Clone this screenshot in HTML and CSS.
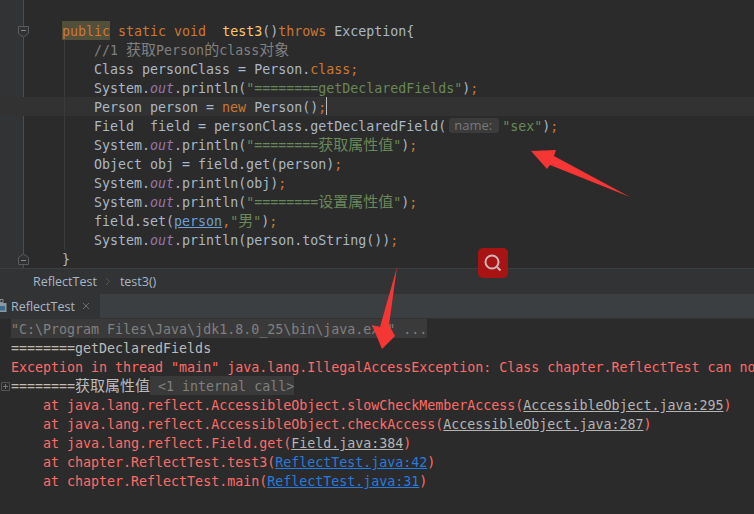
FILE: index.html
```html
<!DOCTYPE html>
<html lang="en">
<head>
<meta charset="utf-8">
<title>ReflectTest</title>
<link rel="stylesheet" href="styles.css">
</head>
<body>
<div class="app">
  <section class="editor">
    <div class="gutter"></div>
    <svg class="fold fold-top" width="13" height="13" viewBox="0 0 13 13"><path d="M1.500 1.500h10v7l-5 3.500-5-3.500z" class="fold-shape"/><path d="M4 5.500h5" class="fold-mark"/></svg>
    <svg class="fold fold-bottom" width="13" height="13" viewBox="0 0 13 13"><path d="M1.500 11.500h10v-7l-5-3.500-5 3.500z" class="fold-shape"/><path d="M4 7.500h5" class="fold-mark"/></svg>
    <div class="code">
      <div class="line">}</div>
      <div class="line"></div>
      <div class="line"><span class="kw hl">public</span> <span class="kw">static void</span>  <span class="fn">test3</span>()<span class="kw">throws</span> Exception{</div>
      <div class="line">    <span class="cm">//1 <span class="cjk">获取</span>Person<span class="cjk">的</span>class<span class="cjk">对象</span></span></div>
      <div class="line">    Class personClass = Person.<span class="kw">class;</span></div>
      <div class="line">    System.<span class="st-f">out</span>.println(<span class="str">"========getDeclaredFields"</span>)<span class="kw">;</span></div>
      <div class="line current">    Person person = <span class="kw">new</span> Person()<span class="kw">;</span><span class="caret"></span></div>
      <div class="line">    Field  field = personClass.getDeclaredField(<span class="hint">name:</span><span class="str">"sex"</span>)<span class="kw">;</span></div>
      <div class="line">    System.<span class="st-f">out</span>.println(<span class="str">"========<span class="cjk">获取属性值</span>"</span>)<span class="kw">;</span></div>
      <div class="line">    Object obj = field.get(person)<span class="kw">;</span></div>
      <div class="line">    System.<span class="st-f">out</span>.println(obj)<span class="kw">;</span></div>
      <div class="line">    System.<span class="st-f">out</span>.println(<span class="str">"========<span class="cjk">设置属性值</span>"</span>)<span class="kw">;</span></div>
      <div class="line">    field.set(<span class="ul">person</span><span class="kw">,</span><span class="str">"<span class="cjk">男</span>"</span>)<span class="kw">;</span></div>
      <div class="line">    System.<span class="st-f">out</span>.println(person.toString())<span class="kw">;</span></div>
      <div class="line">}</div>
    </div>
    <div class="indent-guide"></div>
  </section>
  <nav class="crumbs">
    <span>ReflectTest</span>
    <svg class="crumb-sep" width="6" height="9" viewBox="0 0 6 9"><path d="M1 1l3.500 3.500L1 8"/></svg>
    <span>test3()</span>
  </nav>
  <div class="tabbar">
    <div class="tab">
      <svg class="tab-icon" width="7" height="14" viewBox="0 0 7 14"><path d="M0 0.500h3v3H0z" class="ti-a"/><path d="M0 4h6.500v9H0z" class="ti-b"/><path d="M0 7h5v4.500H0z" class="ti-c"/></svg>
      <span>ReflectTest</span>
      <svg class="tab-close" width="8" height="8" viewBox="0 0 8 8"><path d="M1 1l6 6M7 1l-6 6"/></svg>
    </div>
  </div>
  <div class="console">
    <div class="cline"><span class="cmd">"C:\Program Files\Java\jdk1.8.0_25\bin\java.exe" ...</span></div>
    <div class="cline">========getDeclaredFields</div>
    <div class="cline err">Exception in thread "main" java.lang.IllegalAccessException: Class chapter.ReflectTest can no</div>
    <div class="cline"><svg class="expand" width="9" height="9" viewBox="0 0 9 9"><path d="M.5.5h8v8h-8z" class="ex-box"/><path d="M2 4.500h5M4.500 2v5" class="ex-mark"/></svg>========<span class="cjk">获取属性值</span><span class="folded"> &lt;1 internal call&gt;</span></div>
    <div class="cline err">    at java.lang.reflect.AccessibleObject.slowCheckMemberAccess(<span class="lib">AccessibleObject.java:295</span>)</div>
    <div class="cline err">    at java.lang.reflect.AccessibleObject.checkAccess(<span class="lib">AccessibleObject.java:287</span>)</div>
    <div class="cline err">    at java.lang.reflect.Field.get(<span class="lib">Field.java:384</span>)</div>
    <div class="cline err">    at chapter.ReflectTest.test3(<span class="link">ReflectTest.java:42</span>)</div>
    <div class="cline err">    at chapter.ReflectTest.main(<span class="link">ReflectTest.java:31</span>)</div>
  </div>
  <svg class="arrows" width="754" height="514" viewBox="0 0 754 514">
    <path d="M531 151L556 150 554 156 630 197 550 165 547 169z" class="arrow"/>
    <path d="M397 267L389 325 395 336 382 349 372 325 380 327z" class="arrow"/>
  </svg>
  <div class="badge">
    <svg width="30" height="30" viewBox="0 0 30 30"><circle cx="14" cy="14" r="6.500"/><path d="M19 19l3.500 3.500"/></svg>
  </div>
</div>
</body>
</html>
```

FILE: styles.css
```css
* { box-sizing: border-box; }
html, body { margin: 0; padding: 0; background: #2b2b2b; }
.app {
  position: relative;
  width: 754px;
  height: 514px;
  overflow: hidden;
  display: flex;
  flex-direction: column;
  background: #2b2b2b;
}
.code, .console {
  font-family: "DejaVu Sans Mono", monospace;
  font-size: 13.3px;
}
.code { color: #a9b7c6; position: relative; margin-top: -17px; }
.editor {
  position: relative;
  height: 268px;
  flex: none;
  overflow: hidden;
  background: #2b2b2b;
}
.gutter {
  position: absolute;
  left: 0;
  top: 0;
  bottom: 0;
  width: 24px;
  background: #313335;
  border-right: 1px solid #4b4d4e;
}
.fold { position: absolute; left: 17px; z-index: 1; }
.fold-top { top: 25px; }
.fold-bottom { top: 253px; }
.fold-shape { fill: #2f3133; stroke: #5a5c5e; }
.fold-mark { stroke: #888; fill: none; }
.indent-guide {
  position: absolute;
  left: 64px;
  top: 40px;
  height: 210px;
  width: 1px;
  background: #3b3b3b;
}
.line {
  height: 19px;
  line-height: 21px;
  padding-left: 62px;
  white-space: pre;
}
.current { background: #323232; }
.kw { color: #cc7832; }
.hl { background: #52503a; display: inline-block; height: 19px; vertical-align: top; }
.fn { color: #ffc66d; }
.cm { color: #808080; }
.str { color: #6a8759; }
.st-f { color: #9876aa; font-style: italic; }
.ul { color: #6a9fd8; text-decoration: underline; }
.cjk { font-family: "Noto Sans CJK SC", sans-serif; font-size: 15px; line-height: 1; }
.caret {
  display: inline-block;
  width: 1px;
  height: 18px;
  background: #bbbbbb;
  vertical-align: top;
}
.hint {
  display: inline-block;
  width: 50px;
  height: 15px;
  margin: 0 3px;
  padding-left: 5px;
  border-radius: 3px;
  background: #3b3b3b;
  color: #787878;
  font-family: "Open Sans", sans-serif;
  font-size: 13px;
  line-height: 15px;
  vertical-align: 1px;
}
.crumbs {
  flex: none;
  height: 26px;
  display: flex;
  align-items: center;
  padding-left: 33px;
  gap: 8.500px;
  background: #313335;
  border-top: 1px solid #3c3e40;
  font-family: "Open Sans", sans-serif;
  font-size: 12.500px;
  color: #a9b7c6;
}
.crumb-sep { fill: none; stroke: #555; }
.tabbar {
  flex: none;
  height: 25px;
  display: flex;
  background: #3c3f41;
  border-bottom: 1px solid #323232;
}
.tab {
  width: 100px;
  display: flex;
  align-items: center;
  background: #313335;
  font-family: "Open Sans", sans-serif;
  font-size: 12.500px;
  color: #a9b7c6;
}
.tab-icon { margin-right: 4px; }
.ti-a { fill: none; stroke: #8a8e90; }
.ti-b { fill: #8a9aa5; }
.ti-c { fill: #3d6d8e; }
.tab-close { margin-left: 7px; fill: none; stroke: #6c6e70; }
.console {
  flex: 1;
  color: #bbbbbb;
  overflow: hidden;
}
.cline {
  position: relative;
  height: 19px;
  line-height: 21px;
  padding-left: 11px;
  white-space: pre;
}
.cmd { display: inline-block; background: #3a3a3a; color: #808080; height: 19px; vertical-align: top; }
.err { color: #ff6b68; }
.lib { color: #b4b4b4; text-decoration: underline; }
.link { color: #287bde; text-decoration: underline; }
.folded { background: #3a3a3a; color: #808080; display: inline-block; height: 19px; vertical-align: top; }
.expand { position: absolute; left: 1px; top: 6px; }
.ex-box { fill: none; stroke: #555; }
.ex-mark { fill: none; stroke: #777; }
.arrows { position: absolute; left: 0; top: 0; pointer-events: none; }
.arrow { fill: #f63535; }
.badge {
  position: absolute;
  left: 478px;
  top: 248px;
  width: 30px;
  height: 30px;
  border-radius: 5px;
  background: #a81414;
}
.badge svg { display: block; fill: none; stroke: #cdb8b8; stroke-width: 2; }
```
